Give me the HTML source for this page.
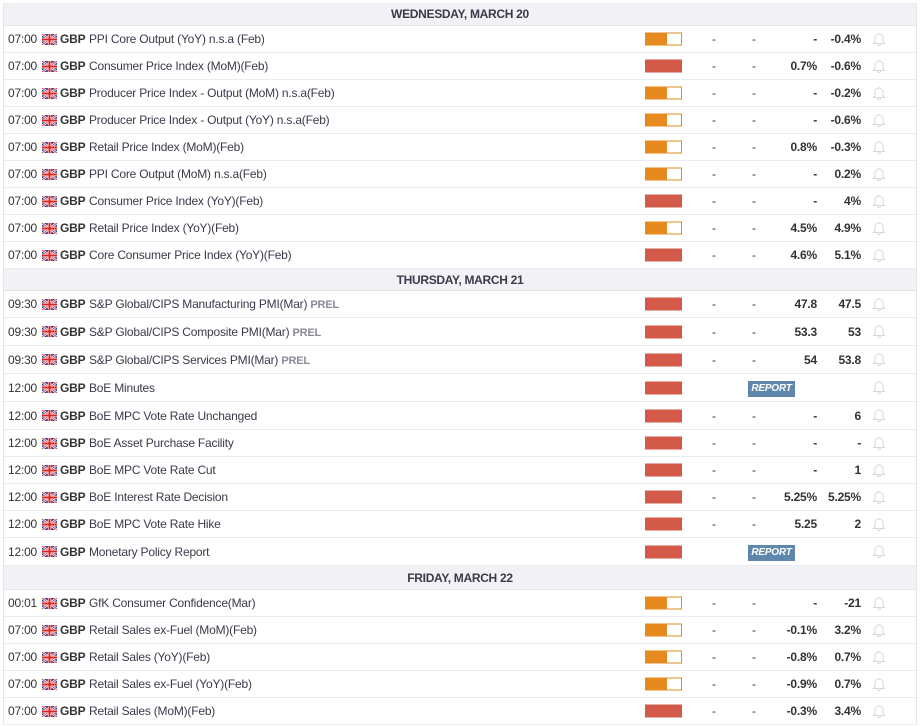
<!DOCTYPE html>
<html><head><meta charset="utf-8"><style>
*{margin:0;padding:0;box-sizing:border-box}
body{width:923px;height:727px;background:#fff;font-family:"Liberation Sans",Arial,sans-serif;font-size:12px;color:#333;overflow:hidden;position:relative}
.wrap{position:absolute;left:3px;top:3px;width:914px;border-left:1px solid #e4e4ea;border-right:1px solid #e4e4ea}
.h{background:#f1f1f6;text-align:center;font-weight:bold;font-size:12px;color:#3a3a48;border-bottom:1px solid #e4e4ea;letter-spacing:-0.3px}
.r{position:relative;border-bottom:1px solid #ececf0;letter-spacing:-0.2px}
.r span{position:absolute;top:50%;transform:translateY(-50%);white-space:nowrap}
.t{left:4px;color:#333}
.fl{left:38px;width:15px;height:11px}
.c{left:56px;font-weight:bold}
.n{left:85px;color:#3a3a4a}
.p{color:#8a8a9a;font-weight:bold;font-size:11px}
.bar{left:641px;width:37px;height:13px}
.red{background:#d35a48}
.or{background:linear-gradient(90deg,#e6891e 0 60%,#fff 60%);border:1.5px solid #e6891e}
.d1{left:708px}.d2{left:748px}
.a{right:99px;font-weight:bold}
.f{right:55px;font-weight:bold}
.bell{left:868px;width:14px;height:15px}
.rep{left:744px;width:47px;height:16px;background:#5f87ab;color:#fff;font-weight:bold;font-style:italic;font-size:10px;text-align:center;line-height:16px;margin-top:1px}
</style></head><body>
<svg width="0" height="0" style="position:absolute">
<symbol id="uk" viewBox="0 0 15 11"><rect width="15" height="11" fill="#2a3f8f"/><path d="M0 0L15 11M15 0L0 11" stroke="#fff" stroke-width="2.4"/><path d="M0 0L15 11M15 0L0 11" stroke="#d22" stroke-width="0.9"/><path d="M7.5 0V11M0 5.5H15" stroke="#fff" stroke-width="3.4"/><path d="M7.5 0V11M0 5.5H15" stroke="#d22" stroke-width="2"/></symbol>
<symbol id="bl" viewBox="0 0 14 15"><path d="M3 11V7a4 4 0 0 1 8 0v4l1.5 1.5h-11z M5.5 13a1.5 1.5 0 0 0 3 0" fill="none" stroke="#d8d8de" stroke-width="1"/><path d="M7 2v1" stroke="#d8d8de"/></symbol>
</svg>
<div class="wrap">
<div class="h" style="height:23px;line-height:23px">WEDNESDAY, MARCH 20</div>

<div class="r" style="height:27px"><span class="t">07:00</span><svg class="fl" style="position:absolute;top:8px;left:38px"><use href="#uk"/></svg><span class="c">GBP</span><span class="n">PPI Core Output (YoY) n.s.a (Feb)</span><span class="bar or"></span><span class="d1">-</span><span class="d2">-</span><span class="a">-</span><span class="f">-0.4%</span><svg class="bell" style="position:absolute;top:5px"><use href="#bl"/></svg></div>
<div class="r" style="height:27px"><span class="t">07:00</span><svg class="fl" style="position:absolute;top:8px;left:38px"><use href="#uk"/></svg><span class="c">GBP</span><span class="n">Consumer Price Index (MoM)(Feb)</span><span class="bar red"></span><span class="d1">-</span><span class="d2">-</span><span class="a">0.7%</span><span class="f">-0.6%</span><svg class="bell" style="position:absolute;top:5px"><use href="#bl"/></svg></div>
<div class="r" style="height:27px"><span class="t">07:00</span><svg class="fl" style="position:absolute;top:8px;left:38px"><use href="#uk"/></svg><span class="c">GBP</span><span class="n">Producer Price Index - Output (MoM) n.s.a(Feb)</span><span class="bar or"></span><span class="d1">-</span><span class="d2">-</span><span class="a">-</span><span class="f">-0.2%</span><svg class="bell" style="position:absolute;top:5px"><use href="#bl"/></svg></div>
<div class="r" style="height:27px"><span class="t">07:00</span><svg class="fl" style="position:absolute;top:8px;left:38px"><use href="#uk"/></svg><span class="c">GBP</span><span class="n">Producer Price Index - Output (YoY) n.s.a(Feb)</span><span class="bar or"></span><span class="d1">-</span><span class="d2">-</span><span class="a">-</span><span class="f">-0.6%</span><svg class="bell" style="position:absolute;top:5px"><use href="#bl"/></svg></div>
<div class="r" style="height:27px"><span class="t">07:00</span><svg class="fl" style="position:absolute;top:8px;left:38px"><use href="#uk"/></svg><span class="c">GBP</span><span class="n">Retail Price Index (MoM)(Feb)</span><span class="bar or"></span><span class="d1">-</span><span class="d2">-</span><span class="a">0.8%</span><span class="f">-0.3%</span><svg class="bell" style="position:absolute;top:5px"><use href="#bl"/></svg></div>
<div class="r" style="height:27px"><span class="t">07:00</span><svg class="fl" style="position:absolute;top:8px;left:38px"><use href="#uk"/></svg><span class="c">GBP</span><span class="n">PPI Core Output (MoM) n.s.a(Feb)</span><span class="bar or"></span><span class="d1">-</span><span class="d2">-</span><span class="a">-</span><span class="f">0.2%</span><svg class="bell" style="position:absolute;top:5px"><use href="#bl"/></svg></div>
<div class="r" style="height:27px"><span class="t">07:00</span><svg class="fl" style="position:absolute;top:8px;left:38px"><use href="#uk"/></svg><span class="c">GBP</span><span class="n">Consumer Price Index (YoY)(Feb)</span><span class="bar red"></span><span class="d1">-</span><span class="d2">-</span><span class="a">-</span><span class="f">4%</span><svg class="bell" style="position:absolute;top:5px"><use href="#bl"/></svg></div>
<div class="r" style="height:27px"><span class="t">07:00</span><svg class="fl" style="position:absolute;top:8px;left:38px"><use href="#uk"/></svg><span class="c">GBP</span><span class="n">Retail Price Index (YoY)(Feb)</span><span class="bar or"></span><span class="d1">-</span><span class="d2">-</span><span class="a">4.5%</span><span class="f">4.9%</span><svg class="bell" style="position:absolute;top:5px"><use href="#bl"/></svg></div>
<div class="r" style="height:27px"><span class="t">07:00</span><svg class="fl" style="position:absolute;top:8px;left:38px"><use href="#uk"/></svg><span class="c">GBP</span><span class="n">Core Consumer Price Index (YoY)(Feb)</span><span class="bar red"></span><span class="d1">-</span><span class="d2">-</span><span class="a">4.6%</span><span class="f">5.1%</span><svg class="bell" style="position:absolute;top:5px"><use href="#bl"/></svg></div>

<div class="h" style="height:22px;line-height:22px">THURSDAY, MARCH 21</div>

<div class="r" style="height:27px"><span class="t">09:30</span><svg class="fl" style="position:absolute;top:8px;left:38px"><use href="#uk"/></svg><span class="c">GBP</span><span class="n">S&amp;P Global/CIPS Manufacturing PMI(Mar) <b class="p">PREL</b></span><span class="bar red"></span><span class="d1">-</span><span class="d2">-</span><span class="a">47.8</span><span class="f">47.5</span><svg class="bell" style="position:absolute;top:5px"><use href="#bl"/></svg></div>
<div class="r" style="height:28px"><span class="t">09:30</span><svg class="fl" style="position:absolute;top:8px;left:38px"><use href="#uk"/></svg><span class="c">GBP</span><span class="n">S&amp;P Global/CIPS Composite PMI(Mar) <b class="p">PREL</b></span><span class="bar red"></span><span class="d1">-</span><span class="d2">-</span><span class="a">53.3</span><span class="f">53</span><svg class="bell" style="position:absolute;top:5px"><use href="#bl"/></svg></div>
<div class="r" style="height:28px"><span class="t">09:30</span><svg class="fl" style="position:absolute;top:8px;left:38px"><use href="#uk"/></svg><span class="c">GBP</span><span class="n">S&amp;P Global/CIPS Services PMI(Mar) <b class="p">PREL</b></span><span class="bar red"></span><span class="d1">-</span><span class="d2">-</span><span class="a">54</span><span class="f">53.8</span><svg class="bell" style="position:absolute;top:5px"><use href="#bl"/></svg></div>
<div class="r" style="height:28px"><span class="t">12:00</span><svg class="fl" style="position:absolute;top:8px;left:38px"><use href="#uk"/></svg><span class="c">GBP</span><span class="n">BoE Minutes</span><span class="bar red"></span><span class="rep">REPORT</span><svg class="bell" style="position:absolute;top:5px"><use href="#bl"/></svg></div>
<div class="r" style="height:28px"><span class="t">12:00</span><svg class="fl" style="position:absolute;top:8px;left:38px"><use href="#uk"/></svg><span class="c">GBP</span><span class="n">BoE MPC Vote Rate Unchanged</span><span class="bar red"></span><span class="d1">-</span><span class="d2">-</span><span class="a">-</span><span class="f">6</span><svg class="bell" style="position:absolute;top:5px"><use href="#bl"/></svg></div>
<div class="r" style="height:27px"><span class="t">12:00</span><svg class="fl" style="position:absolute;top:8px;left:38px"><use href="#uk"/></svg><span class="c">GBP</span><span class="n">BoE Asset Purchase Facility</span><span class="bar red"></span><span class="d1">-</span><span class="d2">-</span><span class="a">-</span><span class="f">-</span><svg class="bell" style="position:absolute;top:5px"><use href="#bl"/></svg></div>
<div class="r" style="height:27px"><span class="t">12:00</span><svg class="fl" style="position:absolute;top:8px;left:38px"><use href="#uk"/></svg><span class="c">GBP</span><span class="n">BoE MPC Vote Rate Cut</span><span class="bar red"></span><span class="d1">-</span><span class="d2">-</span><span class="a">-</span><span class="f">1</span><svg class="bell" style="position:absolute;top:5px"><use href="#bl"/></svg></div>
<div class="r" style="height:27px"><span class="t">12:00</span><svg class="fl" style="position:absolute;top:8px;left:38px"><use href="#uk"/></svg><span class="c">GBP</span><span class="n">BoE Interest Rate Decision</span><span class="bar red"></span><span class="d1">-</span><span class="d2">-</span><span class="a">5.25%</span><span class="f">5.25%</span><svg class="bell" style="position:absolute;top:5px"><use href="#bl"/></svg></div>
<div class="r" style="height:27px"><span class="t">12:00</span><svg class="fl" style="position:absolute;top:8px;left:38px"><use href="#uk"/></svg><span class="c">GBP</span><span class="n">BoE MPC Vote Rate Hike</span><span class="bar red"></span><span class="d1">-</span><span class="d2">-</span><span class="a">5.25</span><span class="f">2</span><svg class="bell" style="position:absolute;top:5px"><use href="#bl"/></svg></div>
<div class="r" style="height:28px"><span class="t">12:00</span><svg class="fl" style="position:absolute;top:8px;left:38px"><use href="#uk"/></svg><span class="c">GBP</span><span class="n">Monetary Policy Report</span><span class="bar red"></span><span class="rep">REPORT</span><svg class="bell" style="position:absolute;top:5px"><use href="#bl"/></svg></div>

<div class="h" style="height:24px;line-height:24px">FRIDAY, MARCH 22</div>

<div class="r" style="height:27px"><span class="t">00:01</span><svg class="fl" style="position:absolute;top:8px;left:38px"><use href="#uk"/></svg><span class="c">GBP</span><span class="n">GfK Consumer Confidence(Mar)</span><span class="bar or"></span><span class="d1">-</span><span class="d2">-</span><span class="a">-</span><span class="f">-21</span><svg class="bell" style="position:absolute;top:5px"><use href="#bl"/></svg></div>
<div class="r" style="height:27px"><span class="t">07:00</span><svg class="fl" style="position:absolute;top:8px;left:38px"><use href="#uk"/></svg><span class="c">GBP</span><span class="n">Retail Sales ex-Fuel (MoM)(Feb)</span><span class="bar or"></span><span class="d1">-</span><span class="d2">-</span><span class="a">-0.1%</span><span class="f">3.2%</span><svg class="bell" style="position:absolute;top:5px"><use href="#bl"/></svg></div>
<div class="r" style="height:27px"><span class="t">07:00</span><svg class="fl" style="position:absolute;top:8px;left:38px"><use href="#uk"/></svg><span class="c">GBP</span><span class="n">Retail Sales (YoY)(Feb)</span><span class="bar or"></span><span class="d1">-</span><span class="d2">-</span><span class="a">-0.8%</span><span class="f">0.7%</span><svg class="bell" style="position:absolute;top:5px"><use href="#bl"/></svg></div>
<div class="r" style="height:27px"><span class="t">07:00</span><svg class="fl" style="position:absolute;top:8px;left:38px"><use href="#uk"/></svg><span class="c">GBP</span><span class="n">Retail Sales ex-Fuel (YoY)(Feb)</span><span class="bar or"></span><span class="d1">-</span><span class="d2">-</span><span class="a">-0.9%</span><span class="f">0.7%</span><svg class="bell" style="position:absolute;top:5px"><use href="#bl"/></svg></div>
<div class="r" style="height:27px"><span class="t">07:00</span><svg class="fl" style="position:absolute;top:8px;left:38px"><use href="#uk"/></svg><span class="c">GBP</span><span class="n">Retail Sales (MoM)(Feb)</span><span class="bar red"></span><span class="d1">-</span><span class="d2">-</span><span class="a">-0.3%</span><span class="f">3.4%</span><svg class="bell" style="position:absolute;top:5px"><use href="#bl"/></svg></div>
</div>
</body></html>
